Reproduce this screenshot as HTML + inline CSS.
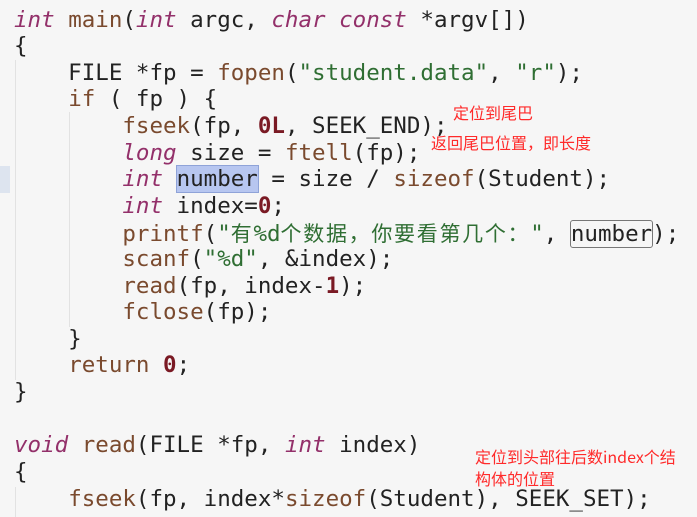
<!DOCTYPE html>
<html><head><meta charset="utf-8"><style>
body{margin:0;width:697px;height:514px;background:#f6f6f6;overflow:hidden;position:relative}
.l{position:absolute;left:14px;white-space:pre;font-family:"DejaVu Sans Mono","Noto Sans CJK SC",monospace;font-size:22.5px;color:#222;line-height:26px}
.k{color:#93306a;font-style:italic}
.f{color:#7a4a2e}
.s{color:#2f6e33}
.n{color:#7a1a24;font-weight:bold}
.cj{font-family:"Noto Sans CJK SC",sans-serif;font-size:21px;letter-spacing:1.7px}
.a{position:absolute;color:#ff2a2a;font-family:"Noto Sans CJK SC",sans-serif;font-size:16px;line-height:22px}
.g{position:absolute;width:1px;background:#e2e2e2}
.sel{background:#b7c6f0;outline:1px solid #8fa3d8}
.box{outline:1px solid #777;border-radius:2px}
</style></head><body>
<div style="position:absolute;left:0;top:166px;width:10px;height:27px;background:#dde4ef"></div>
<div class="g" style="left:15px;top:60px;height:320px"></div>
<div class="g" style="left:69px;top:112px;height:215px"></div>
<div class="g" style="left:15px;top:487px;height:30px"></div>
<div class="l" style="top:7px"><span class="k">int</span> <span class="f">main</span>(<span class="k">int</span> argc, <span class="k">char const</span> *argv[])</div>
<div class="l" style="top:33px">{</div>
<div class="l" style="top:60px">    FILE *fp = <span class="f">fopen</span>(<span class="s">"student.data"</span>, <span class="s">"r"</span>);</div>
<div class="l" style="top:86px">    <span class="f">if</span> ( fp ) {</div>
<div class="l" style="top:113px">        <span class="f">fseek</span>(fp, <span class="n">0L</span>, SEEK_END);</div>
<div class="l" style="top:140px">        <span class="k">long</span> size = <span class="f">ftell</span>(fp);</div>
<div class="l" style="top:166px">        <span class="k">int</span> <span class="sel">number</span> = size / <span class="f">sizeof</span>(Student);</div>
<div class="l" style="top:193px">        <span class="k">int</span> index=<span class="n">0</span>;</div>
<div class="l" style="top:220px">        <span class="f">printf</span>(<span class="s">"<span class="cj">有</span>%d<span class="cj">个数据，你要看第几个：</span>"</span>, <span class="box">number</span>);</div>
<div class="l" style="top:246px">        <span class="f">scanf</span>(<span class="s">"%d"</span>, &amp;index);</div>
<div class="l" style="top:273px">        <span class="f">read</span>(fp, index-<span class="n">1</span>);</div>
<div class="l" style="top:299px">        <span class="f">fclose</span>(fp);</div>
<div class="l" style="top:326px">    }</div>
<div class="l" style="top:352px">    <span class="f">return</span> <span class="n">0</span>;</div>
<div class="l" style="top:379px">}</div>
<div class="l" style="top:432px"><span class="k">void</span> <span class="f">read</span>(FILE *fp, <span class="k">int</span> index)</div>
<div class="l" style="top:459px">{</div>
<div class="l" style="top:486px">    <span class="f">fseek</span>(fp, index*<span class="f">sizeof</span>(Student), SEEK_SET);</div>
<div class="a" style="left:453px;top:101px">定位到尾巴</div>
<div class="a" style="left:431px;top:131px">返回尾巴位置，即长度</div>
<div class="a" style="left:475px;top:445px;width:222px">定位到头部往后数index个结<br>构体的位置</div>
</body></html>
